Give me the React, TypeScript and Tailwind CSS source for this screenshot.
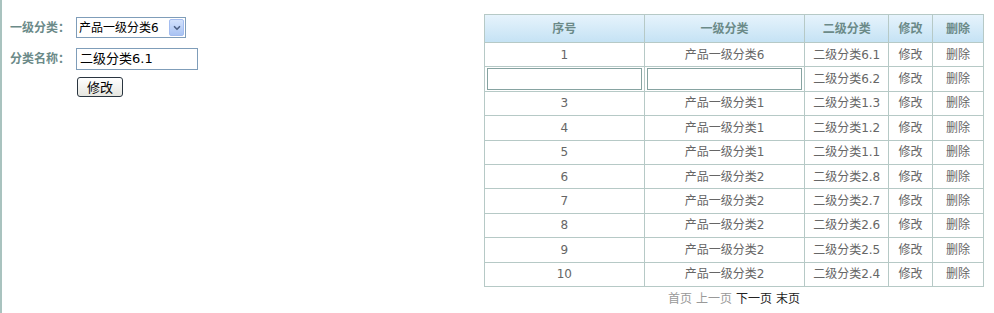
import { ChevronDown } from 'lucide-react';

const rows = [
  { no: '1', first: '产品一级分类6', second: '二级分类6.1' },
  { no: '', first: '', second: '二级分类6.2', editing: true },
  { no: '3', first: '产品一级分类1', second: '二级分类1.3' },
  { no: '4', first: '产品一级分类1', second: '二级分类1.2' },
  { no: '5', first: '产品一级分类1', second: '二级分类1.1' },
  { no: '6', first: '产品一级分类2', second: '二级分类2.8' },
  { no: '7', first: '产品一级分类2', second: '二级分类2.7' },
  { no: '8', first: '产品一级分类2', second: '二级分类2.6' },
  { no: '9', first: '产品一级分类2', second: '二级分类2.5' },
  { no: '10', first: '产品一级分类2', second: '二级分类2.4' },
];

const font = "font-['Tahoma','DejaVu_Sans','Noto_Sans_CJK_SC',sans-serif]";

export default function App() {
  return (
    <div className={`w-[994px] h-[313px] bg-white border-l-2 border-[#a9c3bf] flex justify-between text-[12px] ${font}`}>
      {/* Form */}
      <div className="pl-[8px] pt-[17px]">
        <div className="flex items-center h-[21px]">
          <span className="w-[66px] font-bold text-[#6b8a88]">一级分类：</span>
          <div className="w-[110px] h-[21px] border border-[#7f9db9] flex items-center bg-white">
            <span className="flex-1 pl-[2px] text-black leading-none">产品一级分类6</span>
            <div className="w-[15px] h-[17px] mr-[1px] rounded-[2px] bg-[linear-gradient(#d3e2fc,#a9c3f3)] border border-[#a4bdf0] flex items-center justify-center">
              <ChevronDown className="w-[10px] h-[10px] text-[#4d6185]" strokeWidth={4} />
            </div>
          </div>
        </div>
        <div className="flex items-center h-[22px] mt-[10px]">
          <span className="w-[66px] font-bold text-[#6b8a88]">分类名称：</span>
          <div className="w-[122px] h-[22px] border border-[#7f9db9] flex items-center pl-[3px] text-black text-[13px]">
            二级分类6.1
          </div>
        </div>
        <div className="ml-[67px] mt-[7px]">
          <button className="w-[46px] h-[20px] rounded-[3px] border border-[#2a3540] bg-[linear-gradient(#ffffff,#e6e6e0)] text-[13px] text-black leading-none">
            修改
          </button>
        </div>
      </div>

      {/* Table */}
      <div className="mr-[10px] pt-[14px] flex flex-col items-center">
        <table className="border-collapse w-[500px] text-center">
          <thead>
            <tr className="h-[28px] bg-[linear-gradient(#e6f3fc,#c4e2f4)]">
              <th className="w-[160px] border border-[#b6c9c6] font-bold text-[#6b8a88]">序号</th>
              <th className="w-[161px] border border-[#b6c9c6] font-bold text-[#6b8a88]">一级分类</th>
              <th className="w-[84px] border border-[#b6c9c6] font-bold text-[#6b8a88]">二级分类</th>
              <th className="w-[44px] border border-[#b6c9c6] font-bold text-[#6b8a88]">修改</th>
              <th className="w-[51px] border border-[#b6c9c6] font-bold text-[#6b8a88]">删除</th>
            </tr>
          </thead>
          <tbody>
            {rows.map((r, i) => (
              <tr key={i} className="h-[24.4px] text-[#666666]">
                {r.editing ? (
                  <>
                    <td className="border border-[#b6c9c6] px-[2px]">
                      <div className="h-[22px] border border-[#86a3a1] bg-white" />
                    </td>
                    <td className="border border-[#b6c9c6] px-[2px]">
                      <div className="h-[22px] border border-[#86a3a1] bg-white" />
                    </td>
                  </>
                ) : (
                  <>
                    <td className="border border-[#b6c9c6]">{r.no}</td>
                    <td className="border border-[#b6c9c6]">{r.first}</td>
                  </>
                )}
                <td className="border border-[#b6c9c6]">{r.second}</td>
                <td className="border border-[#b6c9c6]">修改</td>
                <td className="border border-[#b6c9c6]">删除</td>
              </tr>
            ))}
          </tbody>
        </table>
        <div className="mt-[3px] flex gap-[4px]">
          <span className="text-[#999999]">首页</span>
          <span className="text-[#999999]">上一页</span>
          <span className="text-[#222222]">下一页</span>
          <span className="text-[#222222]">末页</span>
        </div>
      </div>
    </div>
  );
}
